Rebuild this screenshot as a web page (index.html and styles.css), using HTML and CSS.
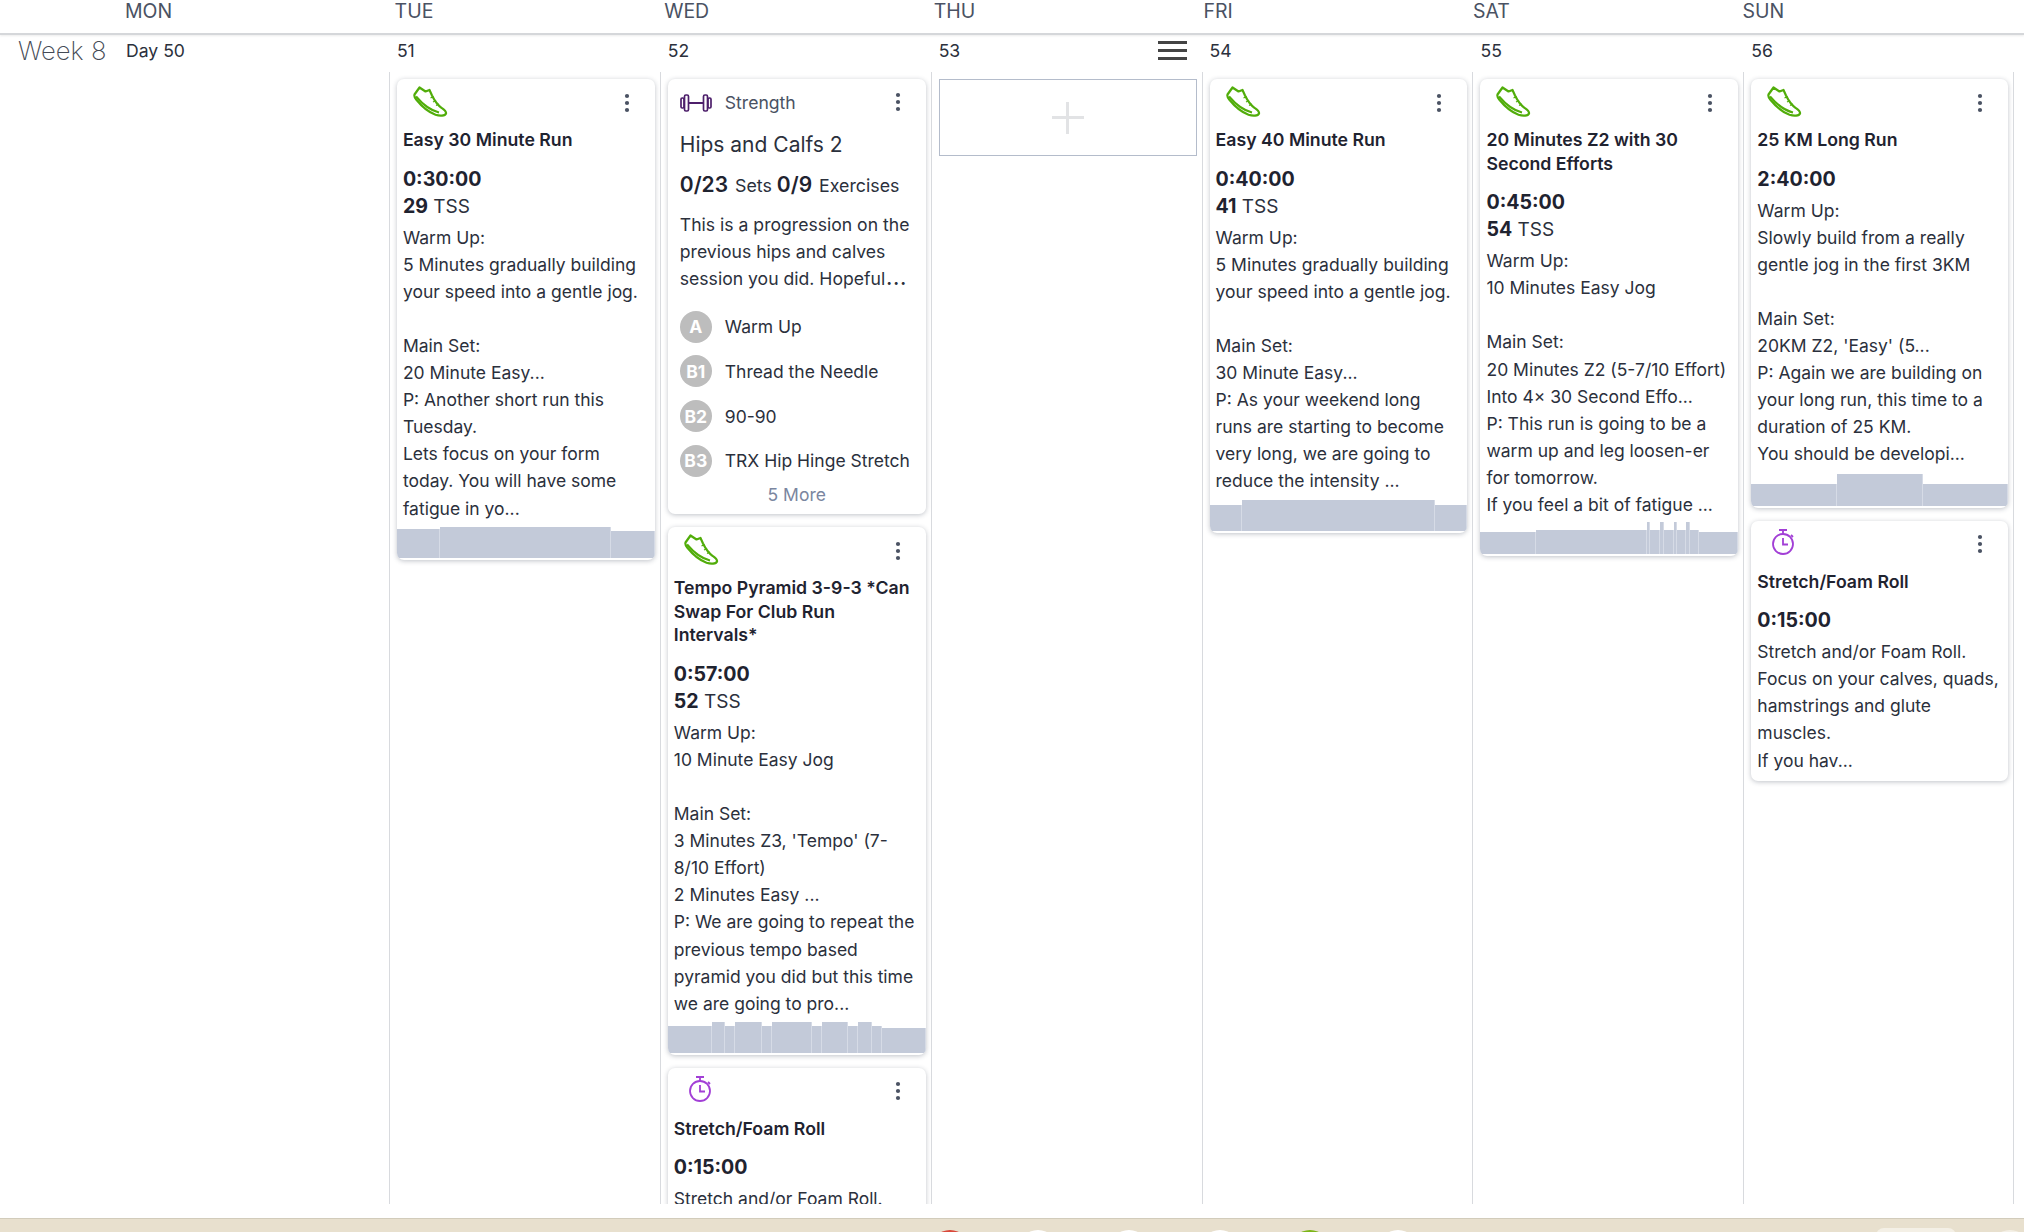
FILE: index.html
```html
<!DOCTYPE html>
<html lang="en">
<head>
  <meta charset="UTF-8" />
  <title>Training Plan</title>
  <link rel="stylesheet" href="styles.css">
</head>
<body>

  <svg class="icon-defs" width="0" height="0">
    <symbol id="shoe" viewBox="0 0 36 32">
      <path d="M7.5 2.5 L2.5 9.5 C2 11 2.6 12.6 4.4 14.8 C9 20.5 16 27 23.5 29.8 C28 31.2 33 31 34 28.5 C34.5 26 32 24.5 29.5 22.8 C25.5 20 22.5 15.5 20 10.5 L17.5 5 L13.5 6.5 Z" fill="none" stroke="currentColor" stroke-width="2.2" stroke-linejoin="round"/>
      <path d="M4 11.5 C9.5 18 17 25 27 27.5" fill="none" stroke="currentColor" stroke-width="2.2"/>
      <path d="M18.5 13 L21.5 11.5 M21 17 L24 15.5 M24 20.5 L27 19" fill="none" stroke="currentColor" stroke-width="1.2"/>
    </symbol>
    <symbol id="dumbbell" viewBox="0 0 32 20">
      <rect x="1" y="5" width="3" height="10" rx="1.2" fill="none" stroke="currentColor" stroke-width="1.7"/>
      <rect x="4.5" y="2" width="4" height="16" rx="1.4" fill="none" stroke="currentColor" stroke-width="1.7"/>
      <rect x="23.5" y="2" width="4" height="16" rx="1.4" fill="none" stroke="currentColor" stroke-width="1.7"/>
      <rect x="28" y="5" width="3" height="10" rx="1.2" fill="none" stroke="currentColor" stroke-width="1.7"/>
      <path d="M8.5 10 H23.5" stroke="currentColor" stroke-width="1.8"/>
    </symbol>
    <symbol id="timer" viewBox="0 0 24 28">
      <circle cx="12" cy="16" r="10" fill="none" stroke="currentColor" stroke-width="1.8"/>
      <path d="M8 2 H16 M12 2 V6 M20 7 L22 9 M12 10 V16.5 H17" fill="none" stroke="currentColor" stroke-width="1.8"/>
    </symbol>
    <symbol id="dots" viewBox="0 0 6 20">
      <circle cx="3" cy="3" r="2.1" fill="currentColor"/>
      <circle cx="3" cy="10" r="2.1" fill="currentColor"/>
      <circle cx="3" cy="17" r="2.1" fill="currentColor"/>
    </symbol>
  </svg>

  <div class="week-head">
    <div class="head-cell"></div>
    <div class="head-cell">MON</div>
    <div class="head-cell">TUE</div>
    <div class="head-cell">WED</div>
    <div class="head-cell">THU</div>
    <div class="head-cell">FRI</div>
    <div class="head-cell">SAT</div>
    <div class="head-cell">SUN</div>
  </div>

  <div class="day-row">
    <div class="week-label">Week 8</div>
    <div class="day-num">Day 50</div>
    <div class="day-num">51</div>
    <div class="day-num">52</div>
    <div class="day-num day-num-menu">53
      <span class="burger"><i></i><i></i><i></i></span>
    </div>
    <div class="day-num">54</div>
    <div class="day-num">55</div>
    <div class="day-num">56</div>
  </div>

  <div class="week-grid">
    <div class="spacer"></div>
    <div class="day day-first"></div>

    <!-- tuesday -->
    <div class="day">
      <div class="card">
        <div class="card-head">
          <svg class="ico-shoe"><use href="#shoe"/></svg>
          <svg class="ico-dots"><use href="#dots"/></svg>
        </div>
        <div class="card-title">Easy 30 Minute Run</div>
        <div class="duration">0:30:00</div>
        <div class="tss"><b>29</b> TSS</div>
        <div class="desc">Warm Up:<br>5 Minutes gradually building your speed into a gentle jog.<br><br>Main Set:<br>20 Minute Easy...<br>P: Another short run this Tuesday.<br>Lets focus on your form today. You will have some fatigue in yo...</div>
        <div class="chart">
          <span style="flex:42;height:29px"></span>
          <span style="flex:172;height:31px"></span>
          <span style="flex:43;height:27px"></span>
        </div>
      </div>
    </div>

    <!-- wednesday -->
    <div class="day">
      <div class="card">
        <div class="card-head card-head-strength">
          <svg class="ico-dumbbell"><use href="#dumbbell"/></svg>
          <span class="sport-name">Strength</span>
          <svg class="ico-dots"><use href="#dots"/></svg>
        </div>
        <div class="strength-body">
          <div class="strength-title">Hips and Calfs 2</div>
          <div class="strength-stats"><b>0/23</b> Sets <b>0/9</b> Exercises</div>
          <div class="strength-desc">This is a progression on the previous hips and calves session you did. Hopeful<b>...</b></div>
          <div class="exercise"><span class="badge">A</span>Warm Up</div>
          <div class="exercise"><span class="badge">B1</span>Thread the Needle</div>
          <div class="exercise"><span class="badge">B2</span>90-90</div>
          <div class="exercise"><span class="badge">B3</span>TRX Hip Hinge Stretch</div>
          <div class="more">5 More</div>
        </div>
      </div>

      <div class="card">
        <div class="card-head">
          <svg class="ico-shoe"><use href="#shoe"/></svg>
          <svg class="ico-dots"><use href="#dots"/></svg>
        </div>
        <div class="card-title">Tempo Pyramid 3-9-3 *Can Swap For Club Run Intervals*</div>
        <div class="duration">0:57:00</div>
        <div class="tss"><b>52</b> TSS</div>
        <div class="desc">Warm Up:<br>10 Minute Easy Jog<br><br>Main Set:<br>3 Minutes Z3, 'Tempo' (7-8/10 Effort)<br>2 Minutes Easy ...<br>P: We are going to repeat the previous tempo based pyramid you did but this time we are going to pro...</div>
        <div class="chart">
          <span style="flex:134;height:27px"></span>
          <span style="flex:40;height:31px"></span>
          <span style="flex:28;height:27px"></span>
          <span style="flex:80;height:31px"></span>
          <span style="flex:29;height:27px"></span>
          <span style="flex:121;height:31px"></span>
          <span style="flex:28;height:27px"></span>
          <span style="flex:81;height:31px"></span>
          <span style="flex:27;height:27px"></span>
          <span style="flex:40;height:31px"></span>
          <span style="flex:28;height:27px"></span>
          <span style="flex:135;height:25px"></span>
        </div>
      </div>

      <div class="card">
        <div class="card-head">
          <svg class="ico-timer"><use href="#timer"/></svg>
          <svg class="ico-dots"><use href="#dots"/></svg>
        </div>
        <div class="card-title">Stretch/Foam Roll</div>
        <div class="duration">0:15:00</div>
        <div class="desc">Stretch and/or Foam Roll.<br>Focus on your calves, quads, hamstrings and glute muscles.<br>If you hav...</div>
      </div>
    </div>

    <!-- thursday -->
    <div class="day">
      <div class="add-box"><span class="plus"></span></div>
    </div>

    <!-- friday -->
    <div class="day">
      <div class="card">
        <div class="card-head">
          <svg class="ico-shoe"><use href="#shoe"/></svg>
          <svg class="ico-dots"><use href="#dots"/></svg>
        </div>
        <div class="card-title">Easy 40 Minute Run</div>
        <div class="duration">0:40:00</div>
        <div class="tss"><b>41</b> TSS</div>
        <div class="desc">Warm Up:<br>5 Minutes gradually building your speed into a gentle jog.<br><br>Main Set:<br>30 Minute Easy...<br>P: As your weekend long runs are starting to become very long, we are going to reduce the intensity ...</div>
        <div class="chart">
          <span style="flex:32;height:26px"></span>
          <span style="flex:193;height:31px"></span>
          <span style="flex:32;height:26px"></span>
        </div>
      </div>
    </div>

    <!-- saturday -->
    <div class="day">
      <div class="card">
        <div class="card-head">
          <svg class="ico-shoe"><use href="#shoe"/></svg>
          <svg class="ico-dots"><use href="#dots"/></svg>
        </div>
        <div class="card-title">20 Minutes Z2 with 30 Second Efforts</div>
        <div class="duration">0:45:00</div>
        <div class="tss"><b>54</b> TSS</div>
        <div class="desc">Warm Up:<br>10 Minutes Easy Jog<br><br>Main Set:<br>20 Minutes Z2 (5-7/10 Effort)<br>Into 4× 30 Second Effo...<br>P: This run is going to be a warm up and leg loosen-er for tomorrow.<br>If you feel a bit of fatigue ...</div>
        <div class="chart">
          <span style="flex:157;height:22px"></span>
          <span style="flex:317;height:24px"></span>
          <span style="flex:7;height:32px"></span>
          <span style="flex:25;height:24px"></span>
          <span style="flex:8;height:32px"></span>
          <span style="flex:25;height:24px"></span>
          <span style="flex:7;height:32px"></span>
          <span style="flex:23;height:24px"></span>
          <span style="flex:8;height:32px"></span>
          <span style="flex:24;height:24px"></span>
          <span style="flex:110;height:22px"></span>
        </div>
      </div>
    </div>

    <!-- sunday -->
    <div class="day day-last">
      <div class="card">
        <div class="card-head">
          <svg class="ico-shoe"><use href="#shoe"/></svg>
          <svg class="ico-dots"><use href="#dots"/></svg>
        </div>
        <div class="card-title">25 KM Long Run</div>
        <div class="duration">2:40:00</div>
        <div class="desc">Warm Up:<br>Slowly build from a really gentle jog in the first 3KM<br><br>Main Set:<br>20KM Z2, 'Easy' (5...<br>P: Again we are building on your long run, this time to a duration of 25 KM.<br>You should be developi...</div>
        <div class="chart chart-low">
          <span style="flex:1;height:22px"></span>
          <span style="flex:1;height:32px"></span>
          <span style="flex:1;height:22px"></span>
        </div>
      </div>

      <div class="card">
        <div class="card-head">
          <svg class="ico-timer"><use href="#timer"/></svg>
          <svg class="ico-dots"><use href="#dots"/></svg>
        </div>
        <div class="card-title">Stretch/Foam Roll</div>
        <div class="duration">0:15:00</div>
        <div class="desc">Stretch and/or Foam Roll.<br>Focus on your calves, quads, hamstrings and glute muscles.<br>If you hav...</div>
      </div>
    </div>
  </div>

  <div class="gap"></div>

  <div class="dock">
    <span class="dock-dot dot-red"></span>
    <span class="dock-dot"></span>
    <span class="dock-dot"></span>
    <span class="dock-dot"></span>
    <span class="dock-dot dot-green"></span>
    <span class="dock-dot"></span>
    <span class="dock-pill"></span>
    <span class="dock-dot dock-end"></span>
  </div>

</body>
</html>
```

FILE: styles.css
```css
body, html {
  height: 100%;
  margin: 0;
  font-family: Inter, "Noto Sans", sans-serif;
  color: #2b303c;
  background-color: white;
  overflow: hidden;
}

body {
  display: flex;
  flex-direction: column;
}

.icon-defs {
  position: absolute;
}

.week-head,
.day-row,
.week-grid {
  display: grid;
  flex: none;
}

.day-row,
.week-grid {
  grid-template-columns: 118px repeat(7, 270.9px);
}

.week-head {
  grid-template-columns: 118px repeat(7, 269.6px);
  height: 33px;
  border-bottom: 2px solid #d5d7da;
  box-shadow: 0 1px 2px rgba(0, 0, 0, 0.08);
}

.head-cell {
  padding-left: 7px;
  font-size: 19.5px;
  line-height: 22px;
  color: #4a5263;
}

.day-row {
  box-sizing: border-box;
  height: 37px;
  padding-bottom: 11px;
  align-items: center;
}

.week-label {
  padding-left: 18px;
  font-size: 25.7px;
  font-weight: 200;
  color: #444a55;
}

.day-num {
  padding-left: 8px;
  font-size: 17.6px;
  color: #2b303c;
}

.day-num-menu {
  display: flex;
  justify-content: space-between;
  align-items: center;
  padding-right: 15px;
}

.burger {
  display: flex;
  flex-direction: column;
  gap: 5px;
  width: 29px;
}

.burger i {
  display: block;
  height: 3px;
  background-color: #444;
}

.week-grid {
  height: 1132px;
  overflow: hidden;
}

.day {
  border-left: 1px solid #d8dade;
  padding: 7px 5px 0 7px;
  min-width: 0;
}

.day-first {
  border-left: none;
}

.day-last {
  border-right: 1px solid #d8dade;
}

.card {
  background-color: white;
  border-radius: 7px;
  box-shadow: 0 1px 5px rgba(30, 40, 60, 0.28);
  margin-bottom: 13px;
  padding-bottom: 2px;
  overflow: hidden;
}

.card-head {
  display: flex;
  justify-content: space-between;
  align-items: center;
  height: 49px;
  padding: 0 25px 0 15px;
  color: #4a5263;
}

.ico-shoe {
  width: 36px;
  height: 32px;
  margin-bottom: 6px;
  color: #51ad0a;
}

.ico-timer {
  width: 24px;
  height: 28px;
  margin-left: 5px;
  margin-bottom: 6px;
  color: #a23fd6;
}

.ico-dots {
  width: 6px;
  height: 20px;
  margin-bottom: 2px;
}

.card-title {
  padding: 0 6px;
  font-size: 17.7px;
  font-weight: 600;
  line-height: 23.6px;
  color: #1f2330;
}

.duration {
  padding: 0 6px;
  margin-top: 14px;
  font-size: 19.6px;
  font-weight: 700;
  line-height: 27px;
  color: #1f2330;
}

.tss {
  padding: 0 6px;
  font-size: 19px;
  line-height: 27px;
}

.tss b {
  font-size: 19.6px;
  font-weight: 700;
  color: #1f2330;
}

.desc {
  padding: 0 6px;
  margin-top: 4px;
  font-size: 17.5px;
  line-height: 27.1px;
}

.desc:last-child {
  padding-bottom: 5px;
}

.chart {
  display: flex;
  align-items: flex-end;
  height: 32px;
  margin-top: 4px;
}

.chart-low {
  margin-top: 6px;
}

.chart span {
  display: block;
  background-color: #c3cad9;
  border-right: 1px solid #d6dbe6;
}

.card-head-strength {
  justify-content: flex-start;
  height: 47px;
  padding: 0 25px 0 12px;
}

.ico-dumbbell {
  width: 32px;
  height: 20px;
  color: #4d1f6b;
}

.sport-name {
  flex: 1;
  margin-left: 13px;
  font-size: 17.6px;
}

.strength-body {
  padding: 0 12px;
}

.strength-title {
  font-size: 21px;
  line-height: 28px;
  margin-top: 5px;
}

.strength-stats {
  margin-top: 11px;
  font-size: 17.8px;
  line-height: 30px;
}

.strength-stats b {
  margin-right: 2px;
  font-size: 21px;
  font-weight: 600;
  color: #1f2330;
}

.strength-desc {
  margin-top: 10px;
  margin-right: -6px;
  font-size: 17.6px;
  line-height: 27.1px;
}

.strength-desc b {
  margin-left: 1px;
  font-weight: 700;
  letter-spacing: 1.2px;
}

.exercise {
  display: flex;
  align-items: center;
  gap: 13px;
  height: 44.7px;
  font-size: 17.5px;
}

.strength-desc + .exercise {
  margin-top: 12px;
}

.badge {
  display: flex;
  justify-content: center;
  align-items: center;
  width: 32px;
  height: 32px;
  border-radius: 50%;
  background-color: #bdbdbd;
  color: white;
  font-weight: 700;
}

.more {
  text-align: center;
  font-size: 17.5px;
  line-height: 24px;
  color: #7a86a0;
  padding-bottom: 5px;
}

.add-box {
  display: flex;
  justify-content: center;
  align-items: center;
  height: 75px;
  border: 1px solid #b4bccb;
}

.plus {
  width: 32px;
  height: 32px;
  background: linear-gradient(#e2e3e5, #e2e3e5) center / 32px 3px no-repeat,
    linear-gradient(#e2e3e5, #e2e3e5) center / 3px 32px no-repeat;
}

.gap {
  flex: 1;
}

/* only the top edge of the dock shows at the bottom of the window */
.dock {
  position: relative;
  flex: none;
  height: 13px;
  background-color: #e8e0ce;
  border-top: 1px solid #d2ccbb;
  overflow: hidden;
}

.dock-dot {
  position: absolute;
  top: 11px;
  width: 40px;
  height: 40px;
  border-radius: 50%;
  background-color: white;
}

.dock-dot:nth-child(1) { left: 930px; }
.dock-dot:nth-child(2) { left: 1018px; }
.dock-dot:nth-child(3) { left: 1109px; }
.dock-dot:nth-child(4) { left: 1200px; }
.dock-dot:nth-child(5) { left: 1290px; }
.dock-dot:nth-child(6) { left: 1378px; }

.dot-red {
  background-color: #d9483b;
}

.dot-green {
  background-color: #7cb518;
}

.dock-pill {
  position: absolute;
  top: 9px;
  left: 1876px;
  width: 80px;
  height: 24px;
  border-radius: 8px;
  background-color: #f4f0e6;
}

.dock-dot:nth-child(8) {
  left: 1990px;
  background-color: #f4f0e6;
}
```
